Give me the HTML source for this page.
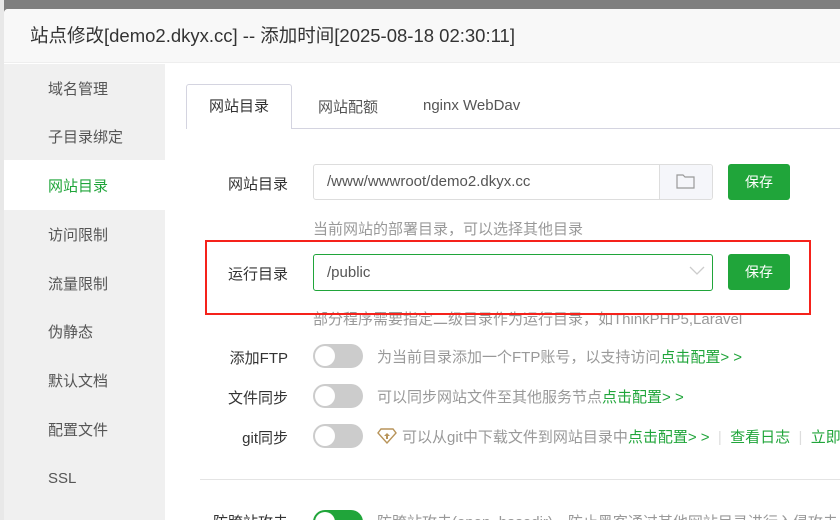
<!DOCTYPE html>
<html><head><meta charset="utf-8"><style>
*{margin:0;padding:0;box-sizing:border-box}
html,body{width:840px;height:520px;overflow:hidden}
body{background:#7f7f7f;font-family:"Liberation Sans","Noto Sans CJK SC",sans-serif;position:relative;font-size:14px;color:#333}
.abs{position:absolute}
.dlg{left:4px;top:9px;width:836px;height:511px;background:#fff;border-radius:4px 0 0 0;overflow:hidden}
.title{left:0;top:0;width:836px;height:54px;background:#f8f8f8;border-bottom:1px solid #eee;font-size:18.5px;color:#333;line-height:54px;padding-left:26px}
.side{left:0;top:55px;width:161px;height:460px;background:#f0f0f0}
.side span{position:absolute;left:44px;font-size:15px;color:#555}
.lbl{font-size:15px;color:#333;text-align:right;width:90px}
.hint{font-size:15px;color:#999;white-space:nowrap}
.btn{background:#20a53a;color:#fff;border-radius:3px;width:62px;height:36px;line-height:36px;text-align:center;font-size:14px}
.tg{width:50px;height:24px;border-radius:12px;background:#ccc}
.tg::after{content:"";position:absolute;left:2px;top:2px;width:20px;height:20px;border-radius:50%;background:#fff}
.g{color:#20a53a}
</style></head><body>
<div class="abs" style="left:0;top:0;width:4px;height:520px;background:#e8e8e8"></div>
<div class="abs dlg">
<div class="abs title">站点修改[demo2.dkyx.cc] -- 添加时间[2025-08-18 02:30:11]</div>
<div class="abs side">
<div style="position:absolute;left:0;top:96px;width:161px;height:50px;background:#fff"></div>
<span style="top:14px">域名管理</span>
<span style="top:62px">子目录绑定</span>
<span style="top:111px;color:#20a53a">网站目录</span>
<span style="top:160px">访问限制</span>
<span style="top:209px">流量限制</span>
<span style="top:257px">伪静态</span>
<span style="top:306px">默认文档</span>
<span style="top:355px">配置文件</span>
<span style="top:406px">SSL</span>
</div>
</div>
<div class="abs" style="left:186px;top:128px;width:654px;height:1px;background:#d4d4e0"></div>
<div class="abs" style="left:186px;top:84px;width:106px;height:45px;background:#fff;border:1px solid #d4d4e0;border-bottom:none;border-radius:3px 3px 0 0;text-align:center;line-height:44px;font-size:15px">网站目录</div>
<div class="abs" style="left:318px;top:96px;font-size:15px;color:#555">网站配额</div>
<div class="abs" style="left:423px;top:97px;font-size:15px;color:#555">nginx WebDav</div>
<div class="abs lbl" style="left:198px;top:173px">网站目录</div>
<div class="abs" style="left:313px;top:164px;width:400px;height:36px;border:1px solid #ddd;border-radius:3px;padding-left:13px;line-height:34px;font-size:15px;color:#555">/www/wwwroot/demo2.dkyx.cc</div>
<div class="abs" style="left:659px;top:165px;width:53px;height:34px;background:#f5f6fa;border-left:1px solid #ddd;border-radius:0 3px 3px 0"></div>
<svg class="abs" style="left:676px;top:173px" width="19" height="16" viewBox="0 0 19 16"><path d="M1 2h6l2 2h9v11H1z" fill="none" stroke="#999" stroke-width="1.2"/></svg>
<div class="abs btn" style="left:728px;top:164px">保存</div>
<div class="abs hint" style="left:313px;top:218px">当前网站的部署目录，可以选择其他目录</div>
<div class="abs lbl" style="left:198px;top:263px">运行目录</div>
<div class="abs" style="left:313px;top:254px;width:400px;height:37px;border:1px solid #20a53a;border-radius:3px;padding-left:13px;line-height:35px;font-size:15px;color:#555">/public</div>
<svg class="abs" style="left:689px;top:266px" width="16" height="10" viewBox="0 0 16 10"><path d="M1 1l7 7 7-7" fill="none" stroke="#ccc" stroke-width="1.3"/></svg>
<div class="abs btn" style="left:728px;top:254px">保存</div>
<div class="abs hint" style="left:313px;top:308px">部分程序需要指定二级目录作为运行目录，如ThinkPHP5,Laravel</div>
<div class="abs" style="left:205px;top:240px;width:606px;height:75px;border:2.5px solid #f5221b"></div>
<div class="abs lbl" style="left:198px;top:347px">添加FTP</div>
<div class="abs tg" style="left:313px;top:344px"></div>
<div class="abs hint" style="left:377px;top:346px">为当前目录添加一个FTP账号，以支持访问<span class="g">点击配置&gt; &gt;</span></div>
<div class="abs lbl" style="left:198px;top:387px">文件同步</div>
<div class="abs tg" style="left:313px;top:384px"></div>
<div class="abs hint" style="left:377px;top:386px">可以同步网站文件至其他服务节点<span class="g">点击配置&gt; &gt;</span></div>
<div class="abs lbl" style="left:198px;top:427px">git同步</div>
<div class="abs tg" style="left:313px;top:424px"></div>
<svg class="abs" style="left:377px;top:428px" width="20" height="16" viewBox="0 0 20 16"><path d="M4 1h12l3 4-9 10L1 5z" fill="none" stroke="#b8945a" stroke-width="1.4"/><path d="M10 5l-3 3h2v3h2V8h2z" fill="#b8945a"/></svg>
<div class="abs hint" style="left:402px;top:426px">可以从git中下载文件到网站目录中<span class="g">点击配置&gt; &gt;</span> &nbsp;<span style="color:#ddd">|</span>&nbsp; <span class="g">查看日志</span> &nbsp;<span style="color:#ddd">|</span>&nbsp; <span class="g">立即</span></div>
<div class="abs" style="left:200px;top:479px;width:640px;height:1px;background:#e4e4e4"></div>
<div class="abs lbl" style="left:198px;top:511px">防跨站攻击</div>
<div class="abs tg" style="left:313px;top:510px;background:#20a53a"></div>
<div class="abs hint" style="left:377px;top:511px">防跨站攻击(open_basedir)，防止黑客通过其他网站目录进行入侵攻击</div>
</body></html>
